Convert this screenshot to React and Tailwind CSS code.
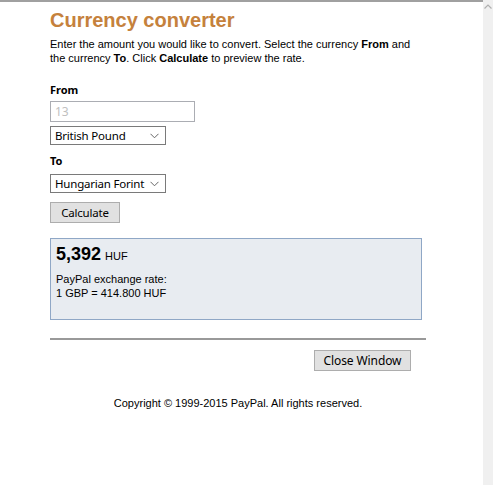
import React from 'react';

function Chevron() {
  return (
    <svg width="9" height="6" viewBox="0 0 9 6" className="shrink-0">
      <path d="M0.5 0.8 L4.5 4.8 L8.5 0.8" fill="none" stroke="#666" strokeWidth="1" />
    </svg>
  );
}

function FakeSelect({ label }) {
  return (
    <div className="flex h-[19px] w-[116px] items-center justify-between border border-[#7a7a7a] bg-white pl-[4px] pr-[6px] text-[11.5px] leading-none tracking-[-0.2px] text-black">
      <span className="whitespace-nowrap">{label}</span>
      <Chevron />
    </div>
  );
}

export default function App() {
  return (
    <div className="flex h-[485px] w-[493px] overflow-hidden bg-white font-['Liberation_Sans',Arial,sans-serif]">
      <div className="flex-1 border-t-2 border-[#a0a0a0]">
        <div className="w-[376px] pl-[50px] box-content">
          <h1 className="mt-[6px] text-[20px] font-bold leading-[24px] text-[#c5813c]">Currency converter</h1>
          <p className="mt-[5px] text-[11px] leading-[14px] text-black">
            Enter the amount you would like to convert. Select the currency <b>From</b> and the currency <b>To</b>. Click <b>Calculate</b> to preview the rate.
          </p>

          <div className="mt-[18px] font-['Noto_Sans',sans-serif]">
            <div className="text-[11px] font-bold leading-[14px] text-black">From</div>
            <div className="mt-[4px] flex h-[21px] w-[145px] items-center border border-[#abadb3] bg-white pl-[4px] text-[12px] text-[#c0c0c0]">13</div>
            <div className="mt-[4px]">
              <FakeSelect label="British Pound" />
            </div>
            <div className="mt-[9px] text-[11px] font-bold leading-[14px] text-black">To</div>
            <div className="mt-[6px]">
              <FakeSelect label="Hungarian Forint" />
            </div>
            <button className="mt-[9px] flex h-[21px] w-[70px] items-center justify-center border border-[#adadad] bg-[#e1e1e1] text-[11.5px] leading-none tracking-[-0.2px] text-black">Calculate</button>
          </div>

          <div className="mt-[15px] h-[82px] w-[372px] border border-[#8fa7c6] bg-[#e8ecf1] px-[5px] pt-[4px]">
            <div className="flex items-baseline gap-[4px]">
              <span className="text-[18px] font-bold leading-[22px] text-black">5,392</span>
              <span className="text-[11px] text-black">HUF</span>
            </div>
            <div className="mt-[7px] text-[11px] leading-[14px] text-black">
              PayPal exchange rate:<br />1 GBP = 414.800 HUF
            </div>
          </div>

          <div className="mt-[18px] h-[2px] w-[376px] bg-[#999]" />

          <div className="mt-[10px] flex justify-end pr-[15px]">
            <button className="flex h-[21px] w-[97px] items-center justify-center border border-[#adadad] bg-[#e1e1e1] font-['Noto_Sans',sans-serif] text-[12px] leading-none tracking-[-0.1px] text-black">Close Window</button>
          </div>

          <p className="mt-[25px] text-center text-[11px] leading-[14px] text-black">Copyright © 1999-2015 PayPal. All rights reserved.</p>
        </div>
      </div>
      <div className="w-[10px] shrink-0 bg-[#f0f0f0] pt-[4px] pl-[1px]">
        <svg width="8" height="5" viewBox="0 0 8 5">
          <path d="M0.5 4.5 L4 1 L7.5 4.5" fill="none" stroke="#b0b0b0" strokeWidth="1.2" />
        </svg>
      </div>
    </div>
  );
}
